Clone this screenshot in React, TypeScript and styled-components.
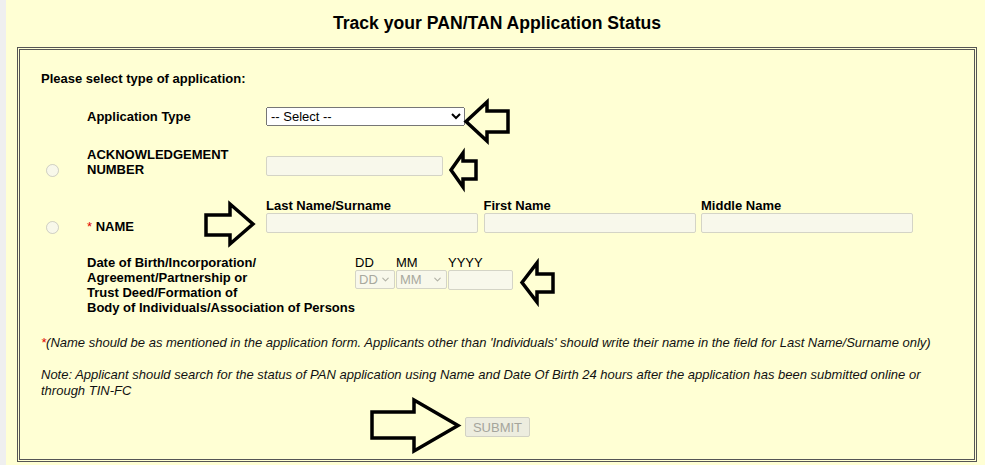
import React from "react";
import styled, { createGlobalStyle } from "styled-components";
import { ChevronDown } from "lucide-react";

// 페이지 기본값: 여백 제거 + Arial 폭의 Liberation Sans
const GlobalStyle = createGlobalStyle`
  html, body {
    margin: 0;
    padding: 0;
    background: #ffffd4;
  }
  body {
    font-family: "Liberation Sans", Arial, sans-serif;
    color: #000;
  }
`;

type ArrowProps = {
  dir: "left" | "right";
  x: number;
  y: number;
  w: number;
  h: number;
  // tip 에서 head 밑변까지 거리
  head: number;
  shaftTop: number;
  shaftBottom: number;
};

// ? 스크린샷 위에 손으로 그린 화살표 (내용 위에 겹쳐지는 주석)
const Arrow = ({ dir, x, y, w, h, head, shaftTop, shaftBottom }: ArrowProps) => {
  const pts: [number, number][] = [
    [0, h / 2],
    [head, 0],
    [head, shaftTop],
    [w, shaftTop],
    [w, shaftBottom],
    [head, shaftBottom],
    [head, h],
  ];
  const points = pts
    .map(([px, py]) => `${dir === "left" ? px : w - px},${py}`)
    .join(" ");
  return (
    <ArrowSvg
      width={w + 8}
      height={h + 8}
      viewBox={`-4 -4 ${w + 8} ${h + 8}`}
      style={{ left: x - 4, top: y - 4 }}
    >
      <polygon
        points={points}
        fill="none"
        stroke="#000"
        strokeWidth={3.5}
        strokeLinejoin="miter"
      />
    </ArrowSvg>
  );
};

// 비활성 날짜 선택 (DD / MM) - chevron 은 직접 그림
const DateSelect = ({ w, label }: { w: number; label: string }) => (
  <SelectShell $w={w}>
    <FlatSelect disabled defaultValue="">
      <option value="">{label}</option>
    </FlatSelect>
    <Chevron size={11} strokeWidth={2.5} />
  </SelectShell>
);

export default function App() {
  return (
    <Page>
      <GlobalStyle />
      <Column>
        <Title>Track your PAN/TAN Application Status</Title>
        <Box>
          <Heading>Please select type of application:</Heading>

          <FieldRow $top={21} $align="center">
            <span />
            <LabelCell>Application Type</LabelCell>
            <div>
              <Select defaultValue="">
                <option value="">-- Select --</option>
                <option value="pan">PAN - New / Change Request</option>
                <option value="tan">TAN - New / Change Request</option>
              </Select>
            </div>
          </FieldRow>

          <FieldRow $top={21}>
            <RadioCell $top={17}>
              <Radio type="radio" name="mode" disabled />
            </RadioCell>
            <LabelCell>
              ACKNOWLEDGEMENT
              <br />
              NUMBER
            </LabelCell>
            <FieldCell $top={8.5}>
              <TextInput $w={177} disabled />
            </FieldCell>
          </FieldRow>

          <FieldRow $top={21}>
            <RadioCell $top={23}>
              <Radio type="radio" name="mode" disabled />
            </RadioCell>
            <LabelCell $top={20.5}>
              <Req>*</Req> NAME
            </LabelCell>
            <NameGrid>
              <div>
                <SubLabel>Last Name/Surname</SubLabel>
                <TextInput $w={212} disabled />
              </div>
              <div>
                <SubLabel>First Name</SubLabel>
                <TextInput $w={212} disabled />
              </div>
              <div>
                <SubLabel>Middle Name</SubLabel>
                <TextInput $w={212} disabled />
              </div>
            </NameGrid>
          </FieldRow>

          <DobRow>
            <DobLabel>
              Date of Birth/Incorporation/
              <br />
              Agreement/Partnership or
              <br />
              Trust Deed/Formation of
              <br />
              Body of Individuals/Association of Persons
            </DobLabel>
            <DateGroup>
              <DatePart>
                <DateCaption>DD</DateCaption>
                <DateSelect w={40} label="DD" />
              </DatePart>
              <DatePart>
                <DateCaption>MM</DateCaption>
                <DateSelect w={51} label="MM" />
              </DatePart>
              <DatePart>
                <DateCaption>YYYY</DateCaption>
                <TextInput $w={65} disabled />
              </DatePart>
            </DateGroup>
          </DobRow>

          <Footnote $top={20}>
            <Req>*</Req>(Name should be as mentioned in the application form.
            Applicants other than 'Individuals' should write their name in the
            field for Last Name/Surname only)
          </Footnote>
          <Footnote $top={16.5}>
            Note: Applicant should search for the status of PAN application
            using Name and Date Of Birth 24 hours after the application has
            been submitted online or through TIN-FC
          </Footnote>

          <SubmitWrap>
            <SubmitButton type="button" disabled>
              SUBMIT
            </SubmitButton>
          </SubmitWrap>
        </Box>
      </Column>

      <Arrow dir="left" x={466} y={102} w={42} h={39} head={21} shaftTop={9} shaftBottom={30} />
      <Arrow dir="left" x={451} y={153} w={25} h={34} head={12} shaftTop={8} shaftBottom={26} />
      <Arrow dir="right" x={206} y={204} w={47} h={40} head={23} shaftTop={11} shaftBottom={31} />
      <Arrow dir="left" x={522} y={263} w={31} h={39} head={15} shaftTop={11} shaftBottom={29} />
      <Arrow dir="right" x={372} y={400} w={86} h={51} head={44} shaftTop={12} shaftBottom={38} />
    </Page>
  );
}

const Page = styled.div`
  position: relative;
  width: 985px;
  height: 465px;
  overflow: hidden;
  background: #ffffd4;
  box-shadow: inset 6px 0 0 #efefef;
`;

const Column = styled.div`
  margin-left: 17px;
  width: 960px;
`;

const Title = styled.h1`
  margin: 0;
  box-sizing: border-box;
  height: 47px;
  padding-top: 13px;
  font-size: 17.6px;
  line-height: 20px;
  font-weight: bold;
  text-align: center;
`;

const Box = styled.div`
  box-sizing: border-box;
  height: 415px;
  border: 3px double #555;
  padding: 0 20px 0 21px;
  font-size: 13px;
  line-height: 15px;
`;

const Heading = styled.div`
  padding-top: 21px;
  font-weight: bold;
`;

const FieldRow = styled.div<{ $top: number; $align?: "start" | "center" }>`
  display: grid;
  grid-template-columns: 46px 179px 1fr;
  align-items: ${({ $align }) => $align ?? "start"};
  margin-top: ${({ $top }) => $top}px;
`;

const RadioCell = styled.div<{ $top: number }>`
  margin-top: ${({ $top }) => $top}px;
  height: 13px;
`;

const Radio = styled.input`
  display: block;
  width: 13px;
  height: 13px;
  margin: 0 0 0 5px;
`;

const LabelCell = styled.div<{ $top?: number }>`
  margin-top: ${({ $top }) => $top ?? 0}px;
  font-weight: bold;
`;

const Req = styled.span`
  color: #e00000;
  font-weight: normal;
`;

const FieldCell = styled.div<{ $top: number }>`
  margin-top: ${({ $top }) => $top}px;
`;

const NameGrid = styled.div`
  display: grid;
  grid-template-columns: repeat(3, 217.5px);
`;

const SubLabel = styled.div`
  font-weight: bold;
`;

const TextInput = styled.input<{ $w: number }>`
  display: block;
  box-sizing: border-box;
  width: ${({ $w }) => $w}px;
  height: 20px;
  margin: 0;
  padding: 0 2px;
  border: 1px solid #d4d4c6;
  border-radius: 2px;
  background: #f8f8eb;
  font: 13px "Liberation Sans", Arial, sans-serif;
`;

const Select = styled.select`
  display: block;
  box-sizing: border-box;
  width: 199px;
  height: 19px;
  margin: 0;
  font: 13px "Liberation Sans", Arial, sans-serif;
  color: #000;
`;

const SelectShell = styled.div<{ $w: number }>`
  position: relative;
  width: ${({ $w }) => $w}px;
  height: 19px;
`;

const FlatSelect = styled.select`
  appearance: none;
  display: block;
  box-sizing: border-box;
  width: 100%;
  height: 100%;
  margin: 0;
  padding: 0 0 0 3px;
  border: 1px solid #d4d4c6;
  border-radius: 2px;
  background: #f8f8eb;
  color: #a9a99e;
  opacity: 1;
  font: 13px "Liberation Sans", Arial, sans-serif;
`;

const Chevron = styled(ChevronDown)`
  position: absolute;
  right: 4px;
  top: 4px;
  color: #b2b2a6;
  pointer-events: none;
`;

const DobRow = styled.div`
  display: flex;
  align-items: flex-start;
  margin-top: 21px;
  padding-left: 46px;
`;

const DobLabel = styled.div`
  width: 268px;
  font-weight: bold;
`;

const DateGroup = styled.div`
  display: flex;
  gap: 1px;
`;

const DatePart = styled.div`
  display: flex;
  flex-direction: column;
`;

const DateCaption = styled.span`
  display: block;
`;

const Footnote = styled.p<{ $top: number }>`
  margin: ${({ $top }) => $top}px 0 0;
  font-style: italic;
  line-height: 15.5px;
  color: #111;
`;

const SubmitWrap = styled.div`
  display: flex;
  justify-content: center;
  margin-top: 19px;
`;

const SubmitButton = styled.button`
  box-sizing: border-box;
  width: 65px;
  height: 20px;
  padding: 0;
  border: 1px solid #d2d2c4;
  border-radius: 2px;
  background: #ededdf;
  color: #a5a59c;
  font: 13px "Liberation Sans", Arial, sans-serif;
`;

const ArrowSvg = styled.svg`
  position: absolute;
  overflow: visible;
  pointer-events: none;
`;
